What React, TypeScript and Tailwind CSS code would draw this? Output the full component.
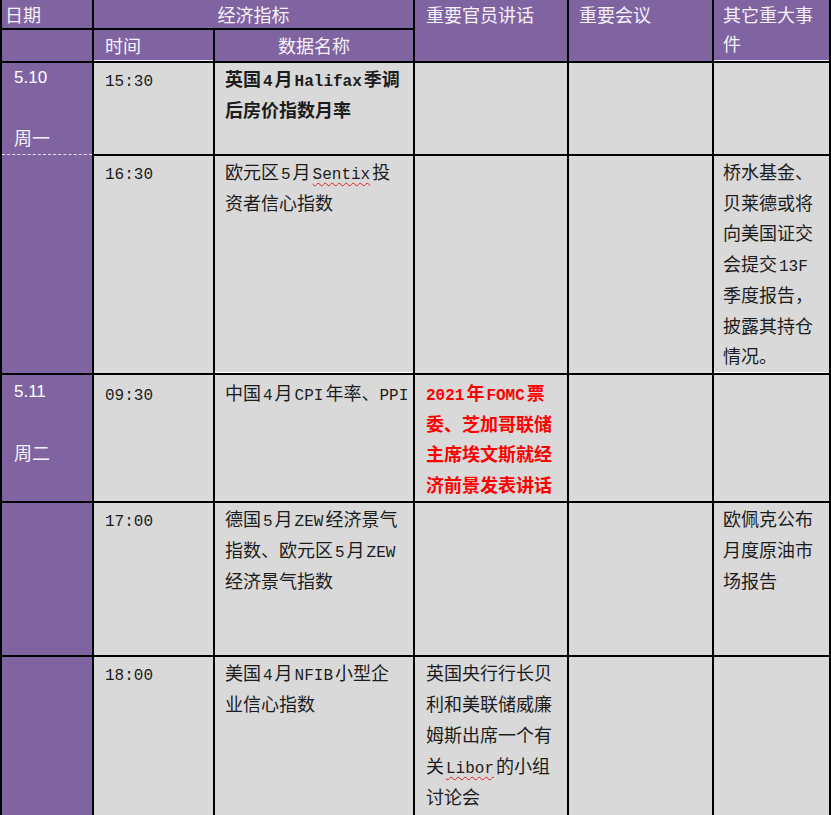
import React from "react";

const M = ({ children, edge }: { children: React.ReactNode; edge?: boolean }) => (
  <span className={"font-['Liberation_Mono',monospace] text-[16px] leading-none " + (edge ? "mr-[2px]" : "mx-[2px]")}>{children}</span>
);

const T = ({ children }: { children: React.ReactNode }) => (
  <span className="font-['Liberation_Mono',monospace] text-[16px] leading-none">{children}</span>
);

const Squig = ({ children }: { children: React.ReactNode }) => (
  <span className="underline decoration-wavy decoration-[#e02020] decoration-1 underline-offset-[3px]">{children}</span>
);

const H = "bg-[#8064a2] text-[#f6f2fa]";
const G = "bg-[#d9d9d9] text-[#1c1c1c]";

export default function App() {
  return (
    <div className="w-[831px] h-[815px] overflow-hidden bg-white">
      <div className="grid grid-cols-[90px_119px_198px_152px_143px_115px] grid-rows-[28px_31px_91px_217px_126px_152px_158px] gap-[2px] px-[2px] bg-black font-['Noto_Sans_CJK_SC',sans-serif] text-[18px]">
        {/* header row 1 */}
        <div className={`${H} pl-[3px] leading-[28px]`}>日期</div>
        <div className={`${H} col-span-2 text-center leading-[28px]`}>经济指标</div>
        <div className={`${H} row-span-2 pl-[11px] leading-[28px]`}>重要官员讲话</div>
        <div className={`${H} row-span-2 pl-[10px] leading-[28px]`}>重要会议</div>
        <div className={`${H} row-span-2 pl-[9px] leading-[29px] border-b border-[#eeeeee]`}>
          <div>其它重大事</div>
          <div>件</div>
        </div>
        {/* header row 2 */}
        <div className={H}></div>
        <div className={`${H} pl-[11px] leading-[31px] border-b border-[#eeeeee]`}>时间</div>
        <div className={`${H} text-center leading-[31px]`}>数据名称</div>

        {/* 5.10 date cell spanning two rows */}
        <div className={`${H} row-span-2 flex flex-col`}>
          <div className="h-[92px] border-b border-dashed border-[#e8e0f0] pl-[12px] leading-[29px]">
            <div className="font-['Liberation_Sans',sans-serif] text-[17px] text-white">5.10</div>
            <div>&nbsp;</div>
            <div className="pt-[2px]">周一</div>
          </div>
          <div className="flex-1"></div>
        </div>

        {/* row 15:30 */}
        <div className={`${G} pl-[11px] leading-[31px]`}><T>15:30</T></div>
        <div className={`${G} pl-[10px] leading-[31px] font-bold whitespace-nowrap`}>
          <div>英国<M>4</M>月<M>Halifax</M>季调</div>
          <div>后房价指数月率</div>
        </div>
        <div className={G}></div>
        <div className={G}></div>
        <div className={G}></div>

        {/* row 16:30 */}
        <div className={`${G} pl-[11px] leading-[31px]`}><T>16:30</T></div>
        <div className={`${G} pl-[10px] leading-[31px] whitespace-nowrap border-b border-white`}>
          <div>欧元区<M>5</M>月<M><Squig>Sentix</Squig></M>投</div>
          <div>资者信心指数</div>
        </div>
        <div className={G}></div>
        <div className={G}></div>
        <div className={`${G} pl-[9px] leading-[30.7px] whitespace-nowrap border-b border-white`}>
          <div>桥水基金、</div>
          <div>贝莱德或将</div>
          <div>向美国证交</div>
          <div>会提交<M>13F</M></div>
          <div>季度报告，</div>
          <div>披露其持仓</div>
          <div>情况。</div>
        </div>

        {/* row 09:30 */}
        <div className={`${H} pl-[12px] leading-[30px] pt-[2px]`}>
          <div className="font-['Liberation_Sans',sans-serif] text-[17px] text-white">5.11</div>
          <div>&nbsp;</div>
          <div>周二</div>
        </div>
        <div className={`${G} pl-[11px] leading-[31px] pt-[2px]`}><T>09:30</T></div>
        <div className={`${G} pl-[10px] leading-[31px] pt-[2px] whitespace-nowrap`}>
          <div>中国<M>4</M>月<M>CPI</M>年率、<M edge>PPI</M></div>
        </div>
        <div className={`${G} pl-[11px] leading-[30.5px] pt-[2px] whitespace-nowrap font-bold text-[#ff0000]`}>
          <div><M edge>2021</M>年<M>FOMC</M>票</div>
          <div>委、芝加哥联储</div>
          <div>主席埃文斯就经</div>
          <div>济前景发表讲话</div>
        </div>
        <div className={G}></div>
        <div className={G}></div>

        {/* row 17:00 */}
        <div className={H}></div>
        <div className={`${G} pl-[11px] leading-[31px]`}><T>17:00</T></div>
        <div className={`${G} pl-[10px] leading-[31px] whitespace-nowrap`}>
          <div>德国<M>5</M>月<M>ZEW</M>经济景气</div>
          <div>指数、欧元区<M>5</M>月<M>ZEW</M></div>
          <div>经济景气指数</div>
        </div>
        <div className={G}></div>
        <div className={G}></div>
        <div className={`${G} pl-[9px] leading-[31px] whitespace-nowrap`}>
          <div>欧佩克公布</div>
          <div>月度原油市</div>
          <div>场报告</div>
        </div>

        {/* row 18:00 */}
        <div className={H}></div>
        <div className={`${G} pl-[11px] leading-[31px]`}><T>18:00</T></div>
        <div className={`${G} pl-[10px] leading-[31px] whitespace-nowrap`}>
          <div>美国<M>4</M>月<M>NFIB</M>小型企</div>
          <div>业信心指数</div>
        </div>
        <div className={`${G} pl-[11px] leading-[31px] whitespace-nowrap`}>
          <div>英国央行行长贝</div>
          <div>利和美联储威廉</div>
          <div>姆斯出席一个有</div>
          <div>关<M><Squig>Libor</Squig></M>的小组</div>
          <div>讨论会</div>
        </div>
        <div className={G}></div>
        <div className={G}></div>
      </div>
    </div>
  );
}
